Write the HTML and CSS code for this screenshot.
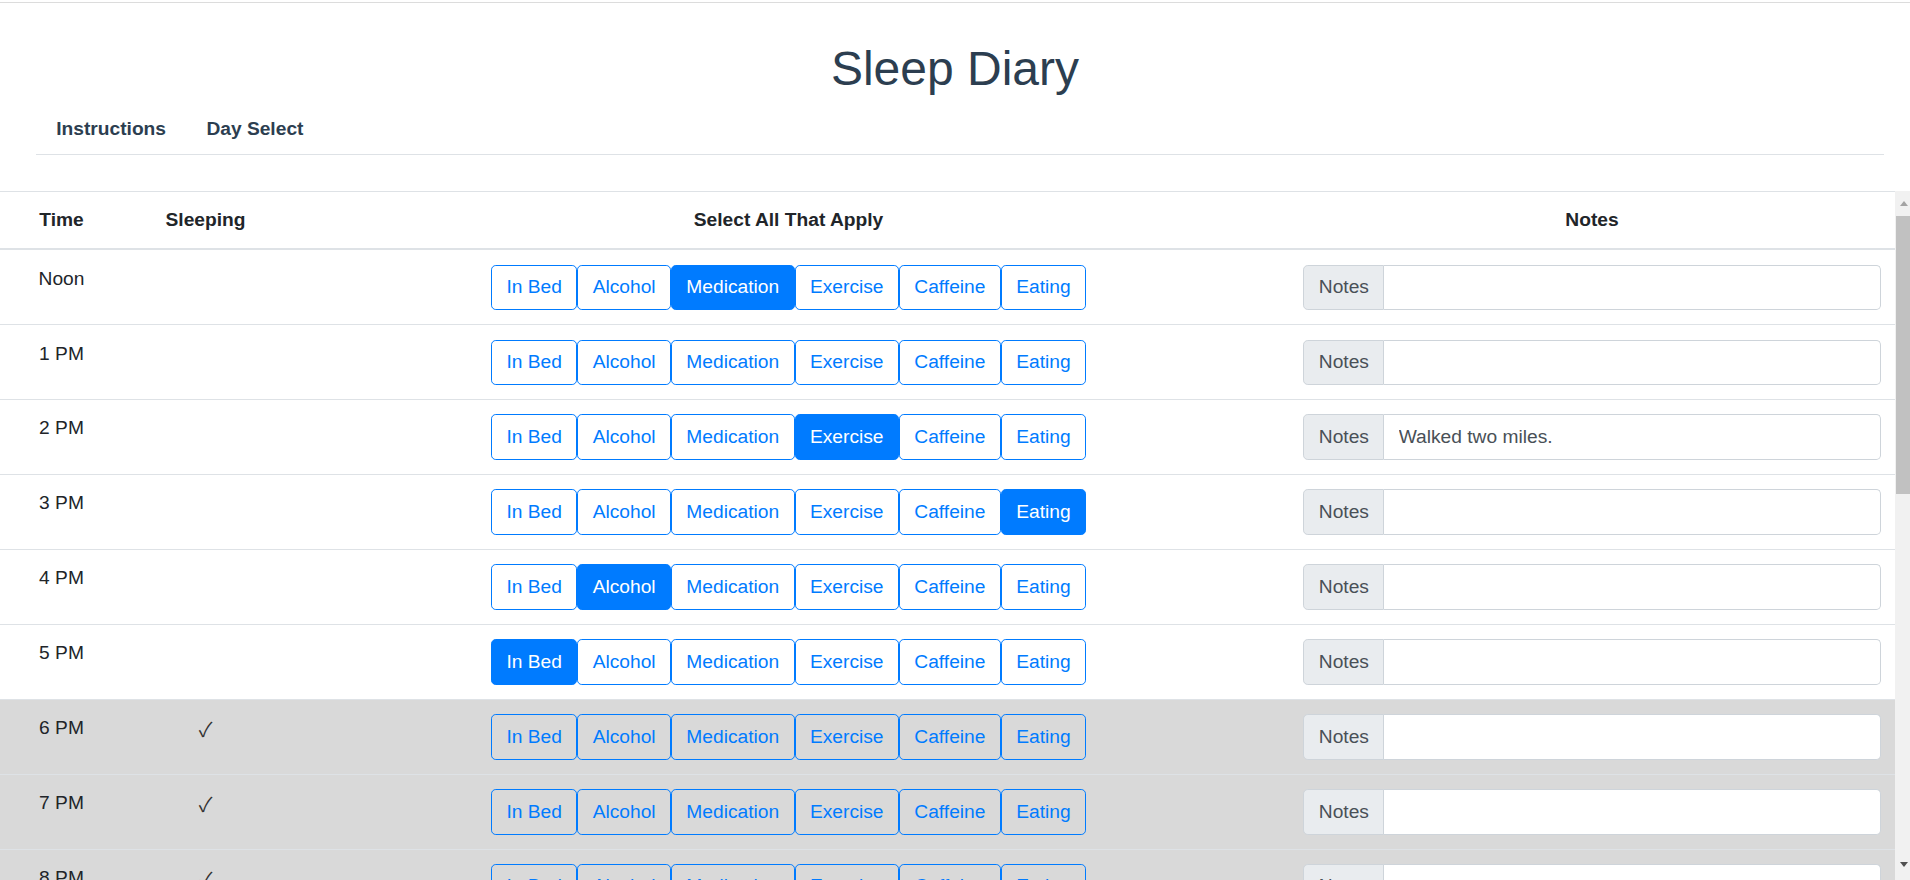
FILE: index.html
```html
<!DOCTYPE html>
<html lang="en">
<head>
<meta charset="utf-8">
<title>Sleep Diary</title>
<link rel="stylesheet" href="styles.css">
</head>
<body>
<div class="app">
  <div class="topline"></div>
  <h1 class="title">Sleep Diary</h1>
  <ul class="tabs">
    <li class="tab"><a class="tab-link" href="#">Instructions</a></li>
    <li class="tab"><a class="tab-link" href="#">Day Select</a></li>
  </ul>
  <div class="table-area">
    <div class="table-wrap">
      <table class="diary">
        <colgroup>
          <col class="col-time">
          <col class="col-sleep">
          <col class="col-opts">
          <col class="col-notes">
        </colgroup>
        <thead>
          <tr><th>Time</th><th>Sleeping</th><th>Select All That Apply</th><th>Notes</th></tr>
        </thead>
        <tbody id="rows"></tbody>
      </table>
    </div>
    <div class="scrollbar" aria-hidden="true">
      <div class="sb-arrow sb-up"></div>
      <div class="sb-thumb"></div>
      <div class="sb-arrow sb-down"></div>
    </div>
  </div>
</div>
<script src="app.js"></script>
</body>
</html>
```
FILE: styles.css
```css
html { font-size: 19.2px; }
* { box-sizing: border-box; }
body {
  margin: 0;
  font-family: "Liberation Sans", Arial, Helvetica, sans-serif;
  font-size: 1rem;
  line-height: 1.5;
  color: #212529;
  background: #fff;
}
.app {
  height: 100vh;
  display: flex;
  flex-direction: column;
  text-align: center;
}
.topline {
  margin-top: 2px;
  border-top: 1px solid #dcdcdc;
  flex: none;
}
.title {
  margin: 37px 0 7px;
  font-size: 48px;
  line-height: 57.6px;
  font-weight: normal;
  color: #2c3e50;
  flex: none;
}
.tabs {
  display: flex;
  list-style: none;
  margin: 0 26px 0 36px;
  padding: 0;
  border-bottom: 1px solid #dee2e6;
  flex: none;
}
.tab { margin-bottom: -1px; }
.tab-link {
  display: block;
  padding: 0.5rem 1rem;
  border: 1px solid transparent;
  font-weight: bold;
  color: #2c3e50;
  text-decoration: none;
}
.table-area {
  margin-top: 36px;
  flex: 1;
  min-height: 0;
  display: flex;
}
.table-wrap {
  flex: 1;
  min-width: 0;
  overflow-y: auto;
  scrollbar-width: none;
}
.scrollbar {
  flex: none;
  width: 15px;
  background: #f1f1f1;
  display: flex;
  flex-direction: column;
  align-items: center;
}
.sb-arrow {
  flex: none;
  width: 0;
  height: 0;
  border-left: 4px solid transparent;
  border-right: 4px solid transparent;
  margin-left: 2px;
}
.sb-up {
  margin-top: 10px;
  border-bottom: 5px solid #a3a3a3;
}
.sb-thumb {
  flex: none;
  align-self: stretch;
  height: 278px;
  margin-top: 10px;
  margin-left: 1px;
  background: #c1c1c1;
}
.sb-down {
  margin-top: auto;
  margin-bottom: 13px;
  border-top: 5px solid #505050;
}
.diary {
  width: 100%;
  border-collapse: collapse;
  table-layout: fixed;
}
.col-time { width: 123px; }
.col-sleep { width: 165px; }
.col-opts { width: 1001px; }
.diary th {
  padding: 0.75rem 0.75rem 13.4px;
  border-top: 1px solid #dee2e6;
  border-bottom: 2px solid #dee2e6;
  vertical-align: bottom;
  font-weight: bold;
  text-align: center;
}
.diary td {
  padding: 0.75rem;
  border-top: 1px solid #dee2e6;
  vertical-align: top;
  text-align: center;
}
.asleep td { background: #d9d9d9; }
.check { font-family: "Noto Sans CJK JP", "DejaVu Sans", sans-serif; font-size: 20px; color: #333; }
.opts { display: inline-flex; }
.opt {
  display: inline-block;
  padding: 0.375rem 0.75rem;
  font-family: inherit;
  font-size: 1rem;
  line-height: 1.5;
  color: #007bff;
  background: transparent;
  border: 1px solid #007bff;
  border-radius: 0.25rem;
  margin: 0;
}
.opt.on { background: #007bff; color: #fff; }
.note { display: flex; width: 100%; }
.note-label {
  padding: 0.375rem 0.75rem;
  background: #e9ecef;
  border: 1px solid #ced4da;
  border-radius: 0.25rem 0 0 0.25rem;
  color: #495057;
  flex: none;
}
.note-input {
  flex: 1;
  min-width: 0;
  height: calc(1.5em + 0.75rem + 2px);
  padding: 0.375rem 0.75rem;
  font-family: inherit;
  font-size: 1rem;
  line-height: 1.5;
  color: #495057;
  background: #fff;
  border: 1px solid #ced4da;
  border-left: 0;
  border-radius: 0 0.25rem 0.25rem 0;
}
```
FILE: app.js
```js
var times = ["Noon","1 PM","2 PM","3 PM","4 PM","5 PM","6 PM","7 PM","8 PM","9 PM","10 PM","11 PM","Midnight","1 AM","2 AM","3 AM","4 AM","5 AM","6 AM","7 AM","8 AM"];
var opts = ["In Bed","Alcohol","Medication","Exercise","Caffeine","Eating"];
var active = {0:"Medication",2:"Exercise",3:"Eating",4:"Alcohol",5:"In Bed"};
var notes = {2:"Walked two miles."};
var body = document.getElementById("rows");
times.forEach(function (t, i) {
  var asleep = i >= 6 && i <= 18;
  var tr = document.createElement("tr");
  if (asleep) tr.className = "asleep";
  var html = "<td>" + t + "</td><td>" + (asleep ? '<span class="check">\u2713</span>' : "") + "</td><td><div class=\"opts\">";
  opts.forEach(function (o) {
    html += '<button class="opt' + (active[i] === o ? " on" : "") + '">' + o + "</button>";
  });
  html += '</div></td><td><div class="note"><span class="note-label">Notes</span><input class="note-input" type="text" value="' + (notes[i] || "") + '"></div></td>';
  tr.innerHTML = html;
  body.appendChild(tr);
});
```
